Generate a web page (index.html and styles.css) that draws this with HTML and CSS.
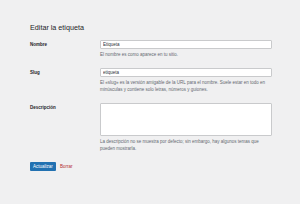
FILE: index.html
```html
<html lang="es">
<head>
    <meta charset="utf-8">
    <title>Editar la etiqueta</title>
    <link rel="stylesheet" href="styles.css">
</head>
<body>
<div class="wrap">
    <h1 class="title">Editar la etiqueta</h1>
    <form class="edit-tag">
        <div class="row">
            <label class="label" for="name">Nombre</label>
            <div class="field">
                <input id="name" class="input" type="text" value="Etiqueta">
                <p class="help">El nombre es como aparece en tu sitio.</p>
            </div>
        </div>
        <div class="row">
            <label class="label" for="slug">Slug</label>
            <div class="field">
                <input id="slug" class="input" type="text" value="etiqueta">
                <p class="help">El «slug» es la versión amigable de la URL para el nombre. Suele estar en todo en minúsculas y contiene solo letras, números y guiones.</p>
            </div>
        </div>
        <div class="row">
            <label class="label" for="description">Descripción</label>
            <div class="field">
                <textarea id="description" class="textarea"></textarea>
                <p class="help">La descripción no se muestra por defecto; sin embargo, hay algunos temas que pueden mostrarla.</p>
            </div>
        </div>
        <div class="actions">
            <button type="button" class="button">Actualizar</button>
            <a href="#" class="delete">Borrar</a>
        </div>
    </form>
</div>
</body>
</html>
```

FILE: styles.css
```css
*,
*:before,
*:after {
    margin: 0;
    padding: 0;
    box-sizing: border-box;
}

body {
    background-color: #f0f0f1;
    font-family: "Liberation Sans", Arial, sans-serif;
    font-size: 4.5px;
    color: #3c434a;
}

.wrap {
    padding: 23px 0 0 30px;
}

.title {
    font-size: 7.2px;
    font-weight: 400;
    line-height: 9px;
    color: #1d2327;
    margin-bottom: 8px;
}

.edit-tag .row {
    display: grid;
    grid-template-columns: 70px 172px;
    margin-bottom: 10px;
}

.edit-tag .label {
    font-weight: 700;
    line-height: 9px;
    color: #1d2327;
}

.edit-tag .input {
    display: block;
    width: 100%;
    height: 9px;
    padding: 0 2px;
    border: 1px solid #c9cacc;
    border-radius: 1px;
    background-color: #ffffff;
    font-family: inherit;
    font-size: 4.5px;
    color: #2c3338;
    outline: none;
}

.edit-tag .textarea {
    display: block;
    width: 100%;
    height: 33px;
    border: 1px solid #c9cacc;
    border-radius: 1px;
    background-color: #ffffff;
    resize: none;
    outline: none;
}

.edit-tag .help {
    margin-top: 2px;
    line-height: 7px;
    color: #646970;
    padding-right: 2px;
}

.edit-tag .row:last-of-type .help {
    margin-top: 4px;
}

.edit-tag .actions {
    display: flex;
    align-items: center;
    gap: 4px;
    padding-top: 0;
}

.edit-tag .button {
    width: 26px;
    height: 9px;
    border: 0;
    border-radius: 1px;
    background-color: #2271b1;
    color: #ffffff;
    font-family: inherit;
    font-size: 4.5px;
}

.edit-tag .delete {
    color: #b32d2e;
    text-decoration: none;
}
```
